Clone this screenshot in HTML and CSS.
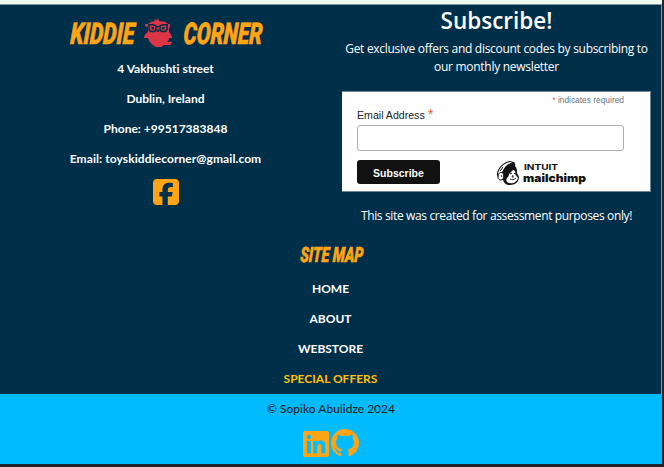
FILE: index.html
```html
<!DOCTYPE html>
<html lang="en">
<head>
<meta charset="utf-8">
<title>Kiddie Corner</title>
<link rel="stylesheet" href="styles.css">
</head>
<body>
<div class="page">
<footer class="footer">
  <div class="columns">
    <section class="contact">
      <h2 class="brand">
        <svg class="word" width="66" height="32" viewBox="0 0 66 32"><text transform="translate(0 27) skewX(-3)" textLength="64" lengthAdjust="spacingAndGlyphs">KIDDIE</text></svg>
        <svg class="bird" width="30" height="30" viewBox="0 0 30 30">
          <path fill="#dc3545" d="M8 4l4-1-1-2 3 1 1-2 1 3h2l-1 1c4-1 6 0 8 2h2v3l-1 1v4c1 1 3 3 3 6l-3 0c0 2-1 3-2 4h3l1-1 1 2-2 2h-6l-3 2h-5c-4-2-7-5-8-9l-4 0c0-3 2-5 4-6V9L2 8V6h3z"/>
          <path fill="none" stroke="#002f4a" stroke-width="1.600" d="M5 6.800h5l3 1M25 6.800h-5l-3 1M6 7v4.500l1.500 2h4l1.500-2V8M24 7v4.500l-1.500 2h-4l-1.500-2V8M13 8.500h4"/>
          <path fill="#002f4a" d="M8.500 9h2.500v2.500H8.500zM19 9h2.500v2.500H19zM14 11.500h2l.5 1.500-1 1h-1l-1-1z"/>
        </svg>
        <svg class="word" width="82" height="32" viewBox="0 0 82 32"><text transform="translate(1 27) skewX(-3)" textLength="79" lengthAdjust="spacingAndGlyphs">CORNER</text></svg>
      </h2>
      <p class="line">4 Vakhushti street</p>
      <p class="line">Dublin, Ireland</p>
      <p class="line">Phone: +99517383848</p>
      <p class="line email">Email: toyskiddiecorner@gmail.com</p>
      <svg class="facebook" viewBox="0 32 448 448"><path d="M64 32C28.7 32 0 60.7 0 96V416c0 35.3 28.7 64 64 64h98.2V334.2H109.4V256h52.8V222.3c0-87.1 39.4-127.5 125-127.5c16.2 0 44.2 3.2 55.7 6.4V172c-6-.6-16.5-1-29.6-1c-42 0-58.2 15.9-58.2 57.2V256h83.6l-14.4 78.2H255V480H384c35.3 0 64-28.7 64-64V96c0-35.3-28.7-64-64-64H64z"/></svg>
    </section>
    <section class="subscribe">
      <h3 class="title">Subscribe!</h3>
      <p class="pitch">Get exclusive offers and discount codes by subscribing to<br>our monthly newsletter</p>
      <form class="form">
        <div class="required"><span class="star">*</span> indicates required</div>
        <label class="label" for="email">Email Address <span class="star big">*</span></label>
        <input class="input" id="email" type="email">
        <div class="actions">
          <button class="button" type="button">Subscribe</button>
          <svg class="mailchimp" width="92" height="26" viewBox="0 0 92 26">
            <path fill="#111" d="M7 10C7 5 10 2 15 1c3-1 5 1 4 4 2 2 2 4 2 7l2 4c0 5-4 8-9 8-4 0-6-2-7-5-3 0-4-3-3-5z"/>
            <path fill="#fff" stroke="#111" stroke-width="1.1" d="M2 15C0 11 5 3 12 1c2-1 4 0 5 1-5 1-8 4-10 9-2 0-3 2-5 4z"/>
            <path fill="none" stroke="#111" d="M4 10l3-4m-1 6l5-7"/>
            <path fill="#fff" stroke="#111" d="M7 12c-3-2-5 1-5 4s3 4 5 2c1-2 1-4 0-6z"/>
            <path fill="#fff" d="M13 13c2-1 2-3 4-4 2 0 3 2 2 4l3 4c-1 4-5 6-9 5-3-1-3-3-2-5 1-1 2-2 2-4z"/>
            <path fill="none" stroke="#111" stroke-width=".9" d="M14 13l2-1m2 0l1 1m-2 1l-1 2 2 0m-4 2c2 1 4 1 6-1M5 14l1 2"/>
            <text class="intuit" x="28" y="8.5" textLength="34" lengthAdjust="spacingAndGlyphs">INTUIT</text>
            <text class="chimp" x="27" y="20.5" textLength="63" lengthAdjust="spacingAndGlyphs">mailchimp</text>
          </svg>
        </div>
      </form>
      <p class="note">This site was created for assessment purposes only!</p>
    </section>
  </div>
  <nav class="sitemap">
    <svg class="word small" width="72" height="26" viewBox="0 0 72 26"><text transform="translate(5 21) skewX(-3)" textLength="63" lengthAdjust="spacingAndGlyphs">SITE MAP</text></svg>
    <a class="link">HOME</a>
    <a class="link">ABOUT</a>
    <a class="link">WEBSTORE</a>
    <a class="link offers">SPECIAL OFFERS</a>
  </nav>
</footer>
<div class="copyright">
  <p class="owner">© Sopiko Abulidze 2024</p>
  <div class="social">
    <svg class="linkedin" viewBox="0 32 448 448"><path d="M416 32H31.9C14.3 32 0 46.5 0 64.3v383.4C0 465.5 14.3 480 31.9 480H416c17.6 0 32-14.5 32-32.3V64.3c0-17.8-14.4-32.3-32-32.3zM135.4 416H69V202.2h66.5V416zm-33.2-243c-21.3 0-38.5-17.3-38.5-38.5S80.9 96 102.2 96c21.2 0 38.5 17.3 38.5 38.5 0 21.3-17.2 38.5-38.5 38.5zm282.1 243h-66.4V312c0-24.8-.5-56.7-34.5-56.7-34.6 0-39.9 27-39.9 54.9V416h-66.4V202.2h63.7v29.2h.9c8.9-16.8 30.6-34.5 62.9-34.5 67.2 0 79.7 44.3 79.7 101.9V416z"/></svg>
    <svg class="github" viewBox="0 0 16 16"><path d="M8 0C3.58 0 0 3.58 0 8c0 3.54 2.29 6.53 5.47 7.59.4.07.55-.17.55-.38 0-.19-.01-.82-.01-1.49-2.01.37-2.53-.49-2.69-.94-.09-.23-.48-.94-.82-1.13-.28-.15-.68-.52-.01-.53.63-.01 1.08.58 1.23.82.72 1.21 1.87.87 2.33.66.07-.52.28-.87.51-1.07-1.78-.2-3.64-.89-3.64-3.95 0-.87.31-1.59.82-2.15-.08-.2-.36-1.02.08-2.12 0 0 .67-.21 2.2.82.64-.18 1.32-.27 2-.27.68 0 1.36.09 2 .27 1.53-1.04 2.2-.82 2.2-.82.44 1.1.16 1.92.08 2.12.51.56.82 1.27.82 2.15 0 3.07-1.87 3.75-3.65 3.95.29.25.54.73.54 1.48 0 1.07-.01 1.93-.01 2.2 0 .21.15.46.55.38A8.013 8.013 0 0016 8c0-4.42-3.58-8-8-8z"/></svg>
  </div>
</div>
</div>
</body>
</html>
```
FILE: styles.css
```css
* { box-sizing: border-box; }
body { margin: 0; height: 467px; background: #212529; overflow: hidden; font-family: Lato, sans-serif; }
h2, h3, p { margin: 0; }
svg { display: block; overflow: visible; }
.page { width: 662px; height: 464px; padding-top: 4px; background: #f0f9ee; }
.footer { height: 390px; background: #002f4a; border-top: 1px solid #8196a3; border-right: 1px solid #8196a3; }
.columns { display: grid; grid-template-columns: 331px 330px; height: 236px; }
.contact { display: flex; flex-direction: column; align-items: center; padding-top: 12px; }
.brand { display: flex; height: 37px; gap: 8px; padding-left: 2px; }
.bird { margin: 1px 1px 0 -1px; }
.word text { font: italic 900 30px Roboto, sans-serif; fill: #ffa414; stroke: #ffa414; stroke-width: .6px; }
.word.small text { font-size: 21px; }
.line { height: 30px; line-height: 30px; font-size: 12px; font-weight: 700; color: #fff; white-space: nowrap; font-variant-ligatures: none; }
.email { letter-spacing: .08px; }
.facebook { width: 26px; height: 26px; margin-top: 5px; fill: #ffa414; }
.subscribe { padding: 0 10px 0 11px; text-align: center; color: #fff; font-family: "Open Sans", "Noto Sans", sans-serif; }
.title { height: 34px; line-height: 31px; font-size: 22.5px; font-weight: 600; }
.pitch { height: 52px; padding-top: 1px; line-height: 18px; font-size: 12px; letter-spacing: -.29px; white-space: nowrap; }
.form { height: 101px; padding: 3px 26px 0 15px; background: #fff; border: 1px solid #6d8796; border-left: 0; text-align: left; font-family: "Liberation Sans", sans-serif; }
.required { height: 12px; line-height: 10px; font-size: 8.4px; text-align: right; color: #68777d; }
.star { color: #e85c41; }
.big { font-size: 15px; line-height: 10px; }
.label { display: block; height: 18px; line-height: 17px; font-size: 10.6px; color: #222; }
.input { display: block; width: 267px; height: 26px; border: 1px solid #abb0b2; border-radius: 3px; background: #fff; }
.actions { display: flex; margin-top: 9px; gap: 56px; }
.button { width: 83px; height: 24px; padding: 1px 0 0; border: 0; border-radius: 3px; background: #111; color: #fff; font: 700 10.5px "Liberation Sans", sans-serif; }
.mailchimp { margin-top: 1px; }
.intuit { font: 700 8px Inter, sans-serif; fill: #111; }
.chimp { font: 900 11px Inter, sans-serif; fill: #111; }
.note { line-height: 18px; margin-top: 15px; font-size: 12px; letter-spacing: -.36px; white-space: nowrap; }
.sitemap { display: flex; flex-direction: column; align-items: center; }
.sitemap .word { margin-bottom: 7px; }
.link { height: 30px; line-height: 30px; font-size: 12px; font-weight: 700; color: #fff; }
.offers { color: #ffc107; }
.copyright { height: 70px; padding-top: 5px; background: #00bbff; }
.owner { height: 30px; line-height: 20px; text-align: center; font-size: 12px; color: #212529; font-weight: 500; }
.social { display: flex; justify-content: center; gap: 2px; fill: #ffa414; }
.linkedin { width: 26px; height: 26px; margin-top: 2px; }
.github { width: 28px; height: 28px; }
```
